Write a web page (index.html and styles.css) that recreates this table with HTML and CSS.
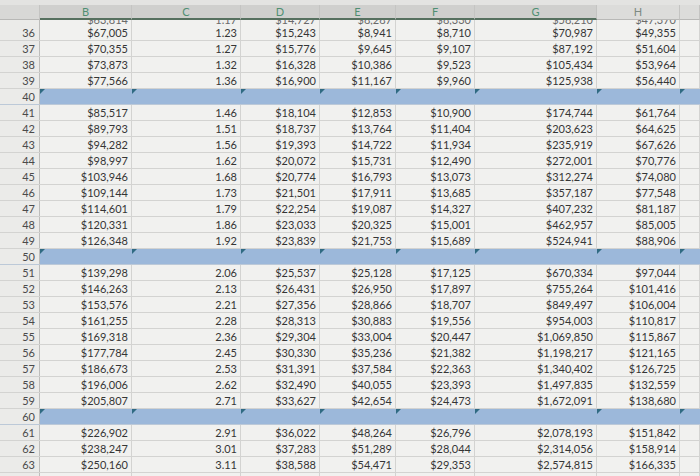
FILE: index.html
```html
<!DOCTYPE html>
<html>
<head>
<meta charset="utf-8">
<link rel="stylesheet" href="styles.css">
</head>
<body>
<div class="sheet">
  <div class="topstrip"></div>
  <div class="row hdr">
    <div class="c corner"></div>
    <div class="c sel">B</div><div class="c sel">C</div><div class="c sel">D</div><div class="c sel">E</div><div class="c sel">F</div><div class="c sel">G</div><div class="c">H</div><div class="c"></div>
  </div>
  <div class="row peek">
    <div class="c rh"></div>
    <div class="c"><span>$63,814</span></div><div class="c"><span>1.17</span></div><div class="c"><span>$14,727</span></div><div class="c"><span>$8,287</span></div><div class="c"><span>$8,330</span></div><div class="c"><span>$58,210</span></div><div class="c"><span>$47,370</span></div><div class="c"></div>
  </div>
  <div class="row"><div class="c rh">36</div><div class="c">$67,005</div><div class="c">1.23</div><div class="c">$15,243</div><div class="c">$8,941</div><div class="c">$8,710</div><div class="c">$70,987</div><div class="c">$49,355</div><div class="c"></div></div>
  <div class="row"><div class="c rh">37</div><div class="c">$70,355</div><div class="c">1.27</div><div class="c">$15,776</div><div class="c">$9,645</div><div class="c">$9,107</div><div class="c">$87,192</div><div class="c">$51,604</div><div class="c"></div></div>
  <div class="row"><div class="c rh">38</div><div class="c">$73,873</div><div class="c">1.32</div><div class="c">$16,328</div><div class="c">$10,386</div><div class="c">$9,523</div><div class="c">$105,434</div><div class="c">$53,964</div><div class="c"></div></div>
  <div class="row"><div class="c rh">39</div><div class="c">$77,566</div><div class="c">1.36</div><div class="c">$16,900</div><div class="c">$11,167</div><div class="c">$9,960</div><div class="c">$125,938</div><div class="c">$56,440</div><div class="c"></div></div>
  <div class="row band"><div class="c rh">40</div><div class="c tri"></div><div class="c tri"></div><div class="c tri"></div><div class="c tri"></div><div class="c tri"></div><div class="c tri"></div><div class="c tri"></div><div class="c tri"></div></div>
  <div class="row"><div class="c rh">41</div><div class="c">$85,517</div><div class="c">1.46</div><div class="c">$18,104</div><div class="c">$12,853</div><div class="c">$10,900</div><div class="c">$174,744</div><div class="c">$61,764</div><div class="c"></div></div>
  <div class="row"><div class="c rh">42</div><div class="c">$89,793</div><div class="c">1.51</div><div class="c">$18,737</div><div class="c">$13,764</div><div class="c">$11,404</div><div class="c">$203,623</div><div class="c">$64,625</div><div class="c"></div></div>
  <div class="row"><div class="c rh">43</div><div class="c">$94,282</div><div class="c">1.56</div><div class="c">$19,393</div><div class="c">$14,722</div><div class="c">$11,934</div><div class="c">$235,919</div><div class="c">$67,626</div><div class="c"></div></div>
  <div class="row"><div class="c rh">44</div><div class="c">$98,997</div><div class="c">1.62</div><div class="c">$20,072</div><div class="c">$15,731</div><div class="c">$12,490</div><div class="c">$272,001</div><div class="c">$70,776</div><div class="c"></div></div>
  <div class="row"><div class="c rh">45</div><div class="c">$103,946</div><div class="c">1.68</div><div class="c">$20,774</div><div class="c">$16,793</div><div class="c">$13,073</div><div class="c">$312,274</div><div class="c">$74,080</div><div class="c"></div></div>
  <div class="row"><div class="c rh">46</div><div class="c">$109,144</div><div class="c">1.73</div><div class="c">$21,501</div><div class="c">$17,911</div><div class="c">$13,685</div><div class="c">$357,187</div><div class="c">$77,548</div><div class="c"></div></div>
  <div class="row"><div class="c rh">47</div><div class="c">$114,601</div><div class="c">1.79</div><div class="c">$22,254</div><div class="c">$19,087</div><div class="c">$14,327</div><div class="c">$407,232</div><div class="c">$81,187</div><div class="c"></div></div>
  <div class="row"><div class="c rh">48</div><div class="c">$120,331</div><div class="c">1.86</div><div class="c">$23,033</div><div class="c">$20,325</div><div class="c">$15,001</div><div class="c">$462,957</div><div class="c">$85,005</div><div class="c"></div></div>
  <div class="row"><div class="c rh">49</div><div class="c">$126,348</div><div class="c">1.92</div><div class="c">$23,839</div><div class="c">$21,753</div><div class="c">$15,689</div><div class="c">$524,941</div><div class="c">$88,906</div><div class="c"></div></div>
  <div class="row band"><div class="c rh">50</div><div class="c tri"></div><div class="c tri"></div><div class="c tri"></div><div class="c tri"></div><div class="c tri"></div><div class="c tri"></div><div class="c tri"></div><div class="c tri"></div></div>
  <div class="row"><div class="c rh">51</div><div class="c">$139,298</div><div class="c">2.06</div><div class="c">$25,537</div><div class="c">$25,128</div><div class="c">$17,125</div><div class="c">$670,334</div><div class="c">$97,044</div><div class="c"></div></div>
  <div class="row"><div class="c rh">52</div><div class="c">$146,263</div><div class="c">2.13</div><div class="c">$26,431</div><div class="c">$26,950</div><div class="c">$17,897</div><div class="c">$755,264</div><div class="c">$101,416</div><div class="c"></div></div>
  <div class="row"><div class="c rh">53</div><div class="c">$153,576</div><div class="c">2.21</div><div class="c">$27,356</div><div class="c">$28,866</div><div class="c">$18,707</div><div class="c">$849,497</div><div class="c">$106,004</div><div class="c"></div></div>
  <div class="row"><div class="c rh">54</div><div class="c">$161,255</div><div class="c">2.28</div><div class="c">$28,313</div><div class="c">$30,883</div><div class="c">$19,556</div><div class="c">$954,003</div><div class="c">$110,817</div><div class="c"></div></div>
  <div class="row"><div class="c rh">55</div><div class="c">$169,318</div><div class="c">2.36</div><div class="c">$29,304</div><div class="c">$33,004</div><div class="c">$20,447</div><div class="c">$1,069,850</div><div class="c">$115,867</div><div class="c"></div></div>
  <div class="row"><div class="c rh">56</div><div class="c">$177,784</div><div class="c">2.45</div><div class="c">$30,330</div><div class="c">$35,236</div><div class="c">$21,382</div><div class="c">$1,198,217</div><div class="c">$121,165</div><div class="c"></div></div>
  <div class="row"><div class="c rh">57</div><div class="c">$186,673</div><div class="c">2.53</div><div class="c">$31,391</div><div class="c">$37,584</div><div class="c">$22,363</div><div class="c">$1,340,402</div><div class="c">$126,725</div><div class="c"></div></div>
  <div class="row"><div class="c rh">58</div><div class="c">$196,006</div><div class="c">2.62</div><div class="c">$32,490</div><div class="c">$40,055</div><div class="c">$23,393</div><div class="c">$1,497,835</div><div class="c">$132,559</div><div class="c"></div></div>
  <div class="row"><div class="c rh">59</div><div class="c">$205,807</div><div class="c">2.71</div><div class="c">$33,627</div><div class="c">$42,654</div><div class="c">$24,473</div><div class="c">$1,672,091</div><div class="c">$138,680</div><div class="c"></div></div>
  <div class="row band"><div class="c rh">60</div><div class="c tri"></div><div class="c tri"></div><div class="c tri"></div><div class="c tri"></div><div class="c tri"></div><div class="c tri"></div><div class="c tri"></div><div class="c tri"></div></div>
  <div class="row"><div class="c rh">61</div><div class="c">$226,902</div><div class="c">2.91</div><div class="c">$36,022</div><div class="c">$48,264</div><div class="c">$26,796</div><div class="c">$2,078,193</div><div class="c">$151,842</div><div class="c"></div></div>
  <div class="row"><div class="c rh">62</div><div class="c">$238,247</div><div class="c">3.01</div><div class="c">$37,283</div><div class="c">$51,289</div><div class="c">$28,044</div><div class="c">$2,314,056</div><div class="c">$158,914</div><div class="c"></div></div>
  <div class="row"><div class="c rh">63</div><div class="c">$250,160</div><div class="c">3.11</div><div class="c">$38,588</div><div class="c">$54,471</div><div class="c">$29,353</div><div class="c">$2,574,815</div><div class="c">$166,335</div><div class="c"></div></div>
  <div class="row"><div class="c rh"></div><div class="c"></div><div class="c"></div><div class="c"></div><div class="c"></div><div class="c"></div><div class="c"></div><div class="c"></div><div class="c"></div></div>
</div>
</body>
</html>
```

FILE: styles.css
```css
html, body {
  margin: 0;
  padding: 0;
  background: #eeeeec;
  overflow: hidden;
}

.sheet {
  width: 700px;
  height: 476px;
  overflow: hidden;
  font-family: Lato, "Liberation Sans", sans-serif;
  font-size: 11px;
  color: #353535;
}

.topstrip {
  height: 5px;
  background: #e3e3e1;
}

.row {
  display: grid;
  grid-template-columns: 40px 92px 109px 79px 76px 79px 122px 83px 20px;
  height: 16px;
  box-sizing: border-box;
  border-bottom: 1px solid #d3d3d1;
}

.c {
  box-sizing: border-box;
  border-right: 1px solid #d3d3d1;
  text-align: right;
  padding-right: 3px;
  line-height: 15px;
  white-space: nowrap;
  overflow: hidden;
  background: #f1f1ef;
}

.rh {
  background: #ebebe9;
  border-right: 1px solid #bdbdbb;
  color: #4a4a4a;
  padding-right: 4px;
}

/* header */
.hdr {
  height: 15px;
  border-bottom: none;
}
.hdr .c {
  text-align: center;
  padding-right: 0;
  line-height: 14px;
  color: #7c8a83;
  background: #dcdcda;
  border-right: 1px solid #c4c4c2;
  border-bottom: 1px solid #b8b8b6;
}
.hdr .corner {
  background: #d8d8d6;
}
.hdr .sel {
  background: #cfcfcd;
  color: #4f8f73;
  border-bottom: 2px solid #56705f;
}

/* partially hidden row under the header */
.peek {
  height: 5px;
  border-bottom: none;
}
.peek .c {
  display: flex;
  justify-content: flex-end;
  align-items: flex-end;
  line-height: 11px;
  color: #6a6a6a;
}

/* blue separator rows */
.band .c {
  background: #9cb8da;
  border-right: none;
  position: relative;
}
.band {
  border-bottom: 1px solid #bcc9d8;
}
.band .rh {
  background: #ebebe9;
  border-right: 1px solid #bdbdbb;
}
.tri::before {
  content: "";
  position: absolute;
  left: 0;
  top: 0;
  border-top: 5px solid #2f6a82;
  border-right: 5px solid transparent;
}
```
